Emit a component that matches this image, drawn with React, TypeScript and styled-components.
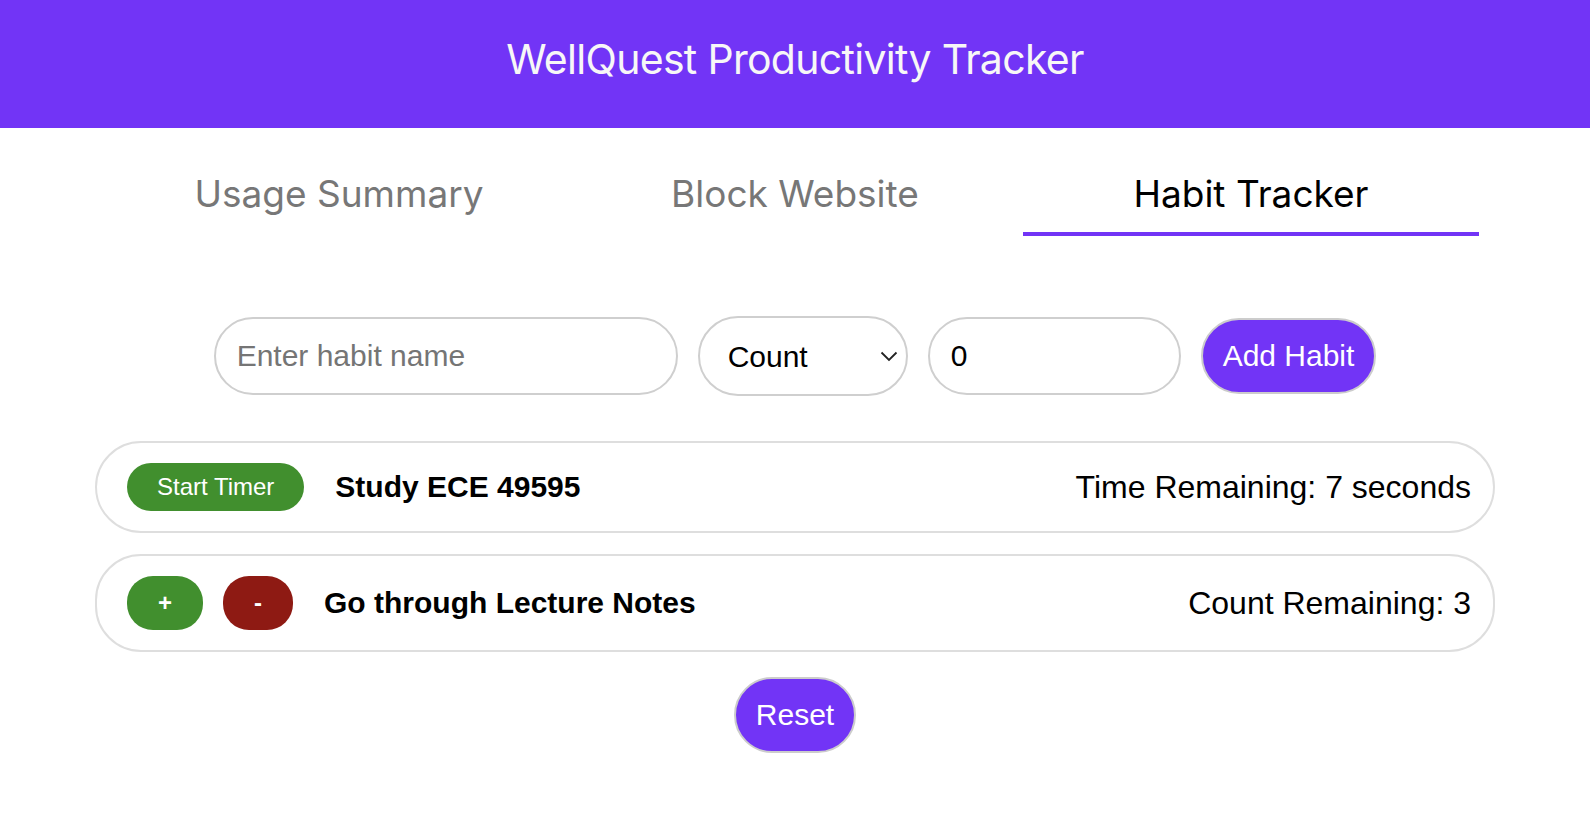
import React, { useState } from "react";
import styled, { createGlobalStyle } from "styled-components";

const PURPLE = "#7234f6";

const GlobalStyle = createGlobalStyle`
  body {
    margin: 0;
    background: #fff;
    font-family: "Liberation Sans", Arial, sans-serif;
  }
`;

const Header = styled.header`
  height: 128px;
  box-sizing: border-box;
  padding-bottom: 10px;
  background: ${PURPLE};
  display: flex;
  align-items: center;
  justify-content: center;
`;

const Title = styled.h1`
  margin: 0;
  font-family: Inter, "Noto Sans", sans-serif;
  font-size: 41px;
  letter-spacing: -0.7px;
  font-weight: 400;
  color: #f7f7f7;
`;

const Tabs = styled.nav`
  display: flex;
  width: 1368px;
  margin: 30px auto 0;
`;

const Tab = styled.div<{ $active?: boolean }>`
  flex: 1;
  text-align: center;
  padding: 13px 0 16px;
  font-family: Inter, "Noto Sans", sans-serif;
  font-size: 37px;
  color: ${(p) => (p.$active ? "#000" : "#777")};
  border-bottom: 4px solid ${(p) => (p.$active ? PURPLE : "transparent")};
  cursor: pointer;
`;

const Form = styled.form`
  display: flex;
  justify-content: center;
  align-items: center;
  gap: 20px;
  margin-top: 80px;
`;

const Field = styled.input<{ $w: number }>`
  box-sizing: border-box;
  width: ${(p) => p.$w}px;
  height: 78px;
  padding: 0 21px;
  border: 2px solid #cfcfcf;
  border-radius: 40px;
  font-family: "Liberation Sans", Arial, sans-serif;
  font-size: 30px;
  color: #000;
  outline: none;

  &::placeholder {
    color: #757575;
  }
`;

const SelectWrap = styled.div`
  position: relative;
`;

const Select = styled.select`
  box-sizing: border-box;
  width: 210px;
  height: 80px;
  padding: 0 50px 0 28px;
  border: 2px solid #cfcfcf;
  border-radius: 40px;
  background: #fff;
  appearance: none;
  font-family: "Liberation Sans", Arial, sans-serif;
  font-size: 30px;
  color: #000;
  outline: none;
`;

const Chevron = styled.svg`
  position: absolute;
  right: 10px;
  top: 35px;
  pointer-events: none;
`;

const PillButton = styled.button`
  box-sizing: border-box;
  height: 76px;
  padding: 0 20px;
  border: 2px solid #cccccc;
  border-radius: 40px;
  background: ${PURPLE};
  color: #fff;
  font-family: "Liberation Sans", Arial, sans-serif;
  font-size: 30px;
  cursor: pointer;
`;

const HabitList = styled.div`
  width: 1400px;
  margin: 45px auto 0;
  display: flex;
  flex-direction: column;
  gap: 21px;
`;

const HabitRow = styled.div`
  display: flex;
  align-items: center;
  border: 2px solid #dedede;
  border-radius: 46px;
  padding: 20px 22px 20px 30px;
`;

const Controls = styled.div`
  display: flex;
  gap: 20px;
`;

const ActionButton = styled.button<{ $color: string; $bold?: boolean }>`
  border: none;
  border-radius: 26px;
  padding: ${(p) => (p.$bold ? "13px 31px" : "10px 30px")};
  background: ${(p) => p.$color};
  color: #fff;
  font-family: "Liberation Sans", Arial, sans-serif;
  font-size: 24px;
  font-weight: ${(p) => (p.$bold ? 700 : 400)};
  cursor: pointer;
`;

const HabitName = styled.span`
  margin-left: 31px;
  font-size: 30px;
  font-weight: 700;
  color: #000;
`;

const Remaining = styled.span`
  margin-left: auto;
  font-size: 32px;
  color: #000;
`;

const Footer = styled.div`
  display: flex;
  justify-content: center;
  margin-top: 25px;
`;

const App: React.FC = () => {
  const [count, setCount] = useState(3);

  return (
    <>
      <GlobalStyle />
      <Header>
        <Title>WellQuest Productivity Tracker</Title>
      </Header>
      <Tabs>
        <Tab>Usage Summary</Tab>
        <Tab>Block Website</Tab>
        <Tab $active>Habit Tracker</Tab>
      </Tabs>
      <Form onSubmit={(e) => e.preventDefault()}>
        <Field $w={464} type="text" placeholder="Enter habit name" />
        <SelectWrap>
          <Select defaultValue="count">
            <option value="count">Count</option>
            <option value="time">Time</option>
          </Select>
          <Chevron width="18" height="11" viewBox="0 0 18 11">
            <path d="M1.5 1.5 L9 9 L16.5 1.5" fill="none" stroke="#222" strokeWidth="1.8" />
          </Chevron>
        </SelectWrap>
        <Field $w={253} type="number" defaultValue={0} />
        <PillButton type="submit">Add Habit</PillButton>
      </Form>
      <HabitList>
        <HabitRow>
          <Controls>
            <ActionButton $color="#418f2e">Start Timer</ActionButton>
          </Controls>
          <HabitName>Study ECE 49595</HabitName>
          <Remaining>Time Remaining: 7 seconds</Remaining>
        </HabitRow>
        <HabitRow>
          <Controls>
            <ActionButton $color="#418f2e" $bold onClick={() => setCount(count + 1)}>
              +
            </ActionButton>
            <ActionButton $color="#8e1a13" $bold onClick={() => setCount(count - 1)}>
              -
            </ActionButton>
          </Controls>
          <HabitName>Go through Lecture Notes</HabitName>
          <Remaining>Count Remaining: {count}</Remaining>
        </HabitRow>
      </HabitList>
      <Footer>
        <PillButton>Reset</PillButton>
      </Footer>
    </>
  );
};

export default App;
